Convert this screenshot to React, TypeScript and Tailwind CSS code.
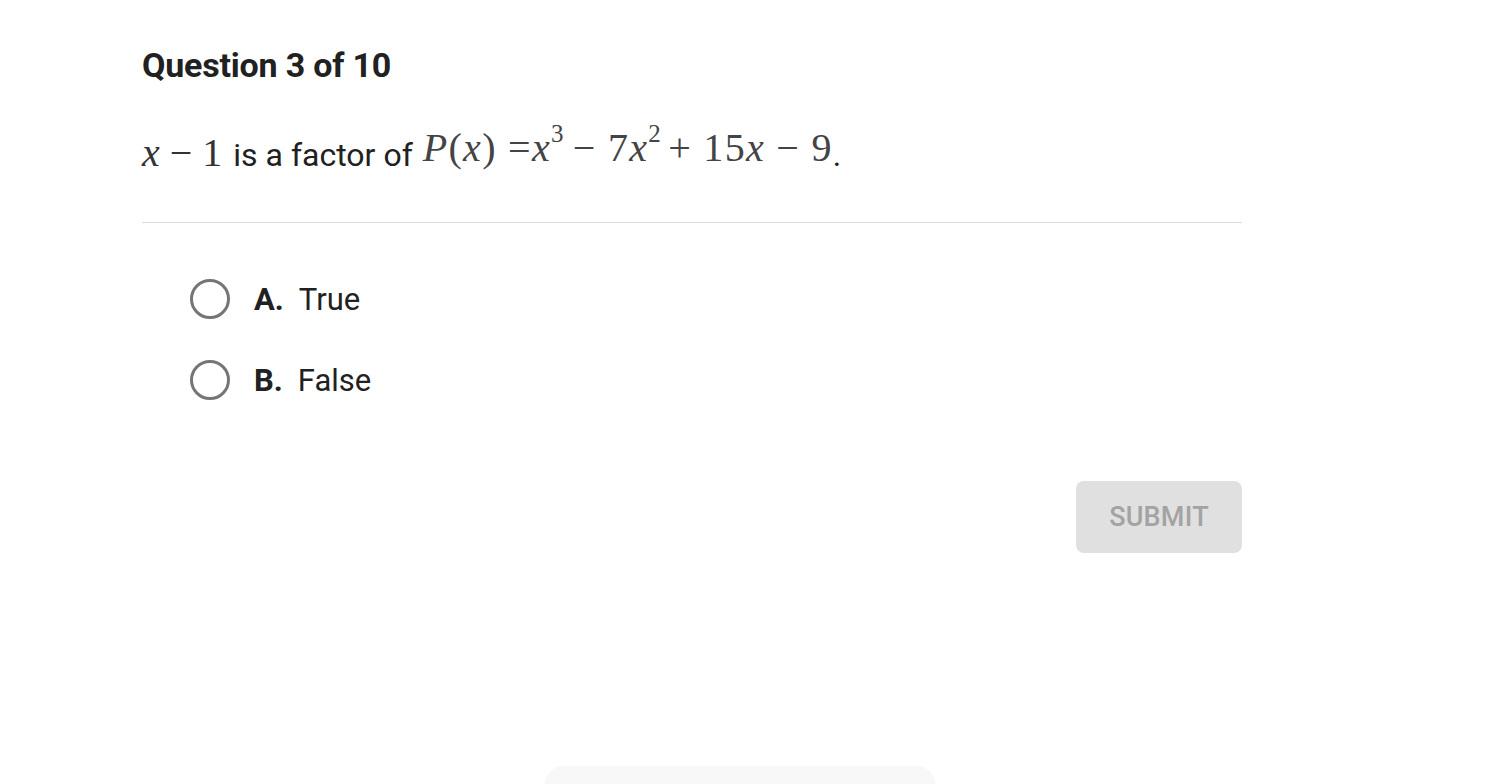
import React, { useState } from 'react';

const options = [
    { key: 'A', label: 'True' },
    { key: 'B', label: 'False' },
];

const serif = "font-['Liberation_Serif','Times_New_Roman',serif]";

export default function App() {
    const [selected, setSelected] = useState<string | null>(null);

    return (
        <div className="min-h-[784px] bg-white font-['Roboto',sans-serif] text-[#212121] overflow-hidden flex flex-col">
            <div className="w-[1100px] ml-[142px] pt-[43px]">
                {/* Header */}
                <h1 className="text-[34px] font-bold leading-[44px] tracking-[-0.2px]">Question 3 of 10</h1>

                {/* Question */}
                <div className="mt-[36px] flex items-baseline h-[60px] text-[32px]">
                    <span className={`${serif} text-[40px] text-[#333] whitespace-nowrap`}>
                        <i>x</i> − 1
                    </span>
                    <span className="ml-[11px]">is a factor of</span>
                    <span className={`${serif} ml-[10px] text-[40px] text-[#444] relative -top-[5px] whitespace-nowrap tracking-[1.3px]`}>
                        <i>P</i>(<i>x</i>) =<i>x</i>
                        <sup className="text-[25px] -top-[0.75em] mr-[8px]">3</sup>− 7<i>x</i>
                        <sup className="text-[25px] -top-[0.75em] mr-[6px]">2</sup>+ 15<i>x</i> − 9
                    </span>
                    <span>.</span>
                </div>

                <div className="mt-[39px] border-t border-[#dcdcdc]" />

                {/* Options */}
                <div className="mt-[56px] ml-[48px] flex flex-col gap-[41px]">
                    {options.map((o) => (
                        <button
                            key={o.key}
                            onClick={() => setSelected(o.key)}
                            className="flex items-center text-left"
                        >
                            <span className="w-[40px] h-[40px] rounded-full border-[3px] border-[#757575] flex items-center justify-center">
                                {selected === o.key && <span className="w-[20px] h-[20px] rounded-full bg-[#757575]" />}
                            </span>
                            <span className="ml-[24px] text-[31px] font-bold leading-[39px]">{o.key}.</span>
                            <span className="ml-[15px] text-[31px] leading-[39px]">{o.label}</span>
                        </button>
                    ))}
                </div>

                {/* Submit */}
                <div className="mt-[81px] flex justify-end">
                    <button className="w-[166px] h-[72px] rounded-[8px] bg-[#e0e0e0] text-[#a3a3a3] text-[27px] font-medium tracking-[0.2px]">
                        SUBMIT
                    </button>
                </div>
            </div>

            <div className="mt-auto ml-[545px] w-[390px] h-[18px] rounded-t-[30px] bg-[#f8f8f8]" />
        </div>
    );
}
